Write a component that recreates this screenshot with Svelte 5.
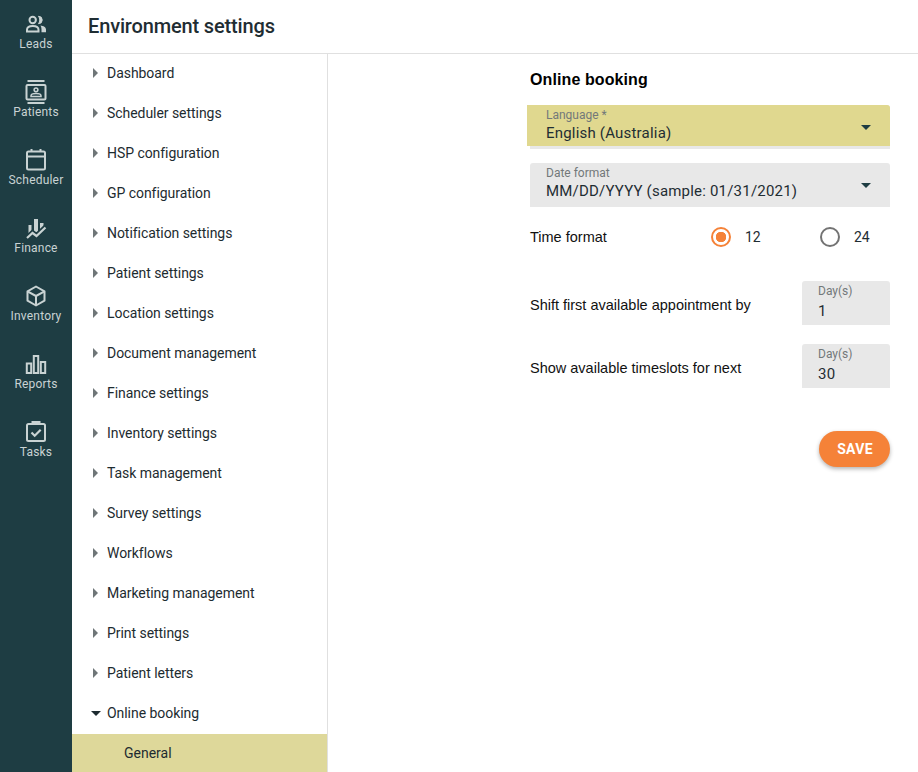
<script>
  const railItems = [
    { label: 'Leads', icon: 'leads' },
    { label: 'Patients', icon: 'patients' },
    { label: 'Scheduler', icon: 'scheduler' },
    { label: 'Finance', icon: 'finance' },
    { label: 'Inventory', icon: 'inventory' },
    { label: 'Reports', icon: 'reports' },
    { label: 'Tasks', icon: 'tasks' }
  ];

  const menu = [
    'Dashboard',
    'Scheduler settings',
    'HSP configuration',
    'GP configuration',
    'Notification settings',
    'Patient settings',
    'Location settings',
    'Document management',
    'Finance settings',
    'Inventory settings',
    'Task management',
    'Survey settings',
    'Workflows',
    'Marketing management',
    'Print settings',
    'Patient letters'
  ];

  let timeFormat = $state('12');
</script>

<div class="shell">
  <nav class="rail">
    {#each railItems as item}
      <div class="rail-item">
        <svg width="24" height="24" viewBox="0 0 24 24" fill="none" stroke="currentColor" stroke-width="2">
          {#if item.icon === 'leads'}
            <circle cx="8.700" cy="8" r="3.200" />
            <path d="M14.500 4.300a3.700 3.700 0 0 1 0 7.400c.9-1 1.300-2.300 1.300-3.700s-.4-2.700-1.300-3.700z" fill="currentColor" stroke-width="1" />
            <path d="M3 19.500v-1.800c0-2.400 2.700-3.700 5.800-3.700s5.700 1.300 5.700 3.700v1.800z" />
            <path d="M16.500 13.500c3 .3 5.500 1.600 5.500 4v2.800h-4.500v-3c0-1.500-.4-2.800-1-3.800z" fill="currentColor" stroke="none" />
          {:else if item.icon === 'patients'}
            <path d="M3.500 1h17M3.500 23h17" />
            <rect x="2.500" y="5" width="19" height="14.500" rx="1" />
            <circle cx="12" cy="9.800" r="1.900" stroke-width="1.500" />
            <path d="M7 16.500v-.8c0-1.400 2.300-2.200 5-2.200s5 .8 5 2.200v.8z" stroke-width="1.500" />
          {:else if item.icon === 'scheduler'}
            <rect x="3" y="3.500" width="18" height="18" rx="1.500" />
            <path d="M3 8.500h18M7.500 1v3M16.500 1v3" />
          {:else if item.icon === 'finance'}
            <path d="M4.500 9h3v9h-3zM10 3h4v15h-4zM16 7h3.500v9H16z" fill="currentColor" stroke="none" />
            <path d="M2 22.500l6.500-6 4 3 9.500-9" stroke="#1e3d43" stroke-width="5" />
            <path d="M3 22l5.500-5 4 3 9-8.500" stroke-width="2.200" />
          {:else if item.icon === 'inventory'}
            <path d="M12 2.500l8.500 4.800v9.400L12 21.500l-8.500-4.800V7.300z" stroke-linejoin="round" />
            <path d="M3.500 7.300L12 12l8.500-4.700M12 12v9.500" />
          {:else if item.icon === 'reports'}
            <rect x="2.800" y="11.500" width="4.400" height="9.500" />
            <rect x="9.800" y="4" width="4.400" height="17" />
            <rect x="16.800" y="10" width="4.400" height="11" />
          {:else}
            <rect x="3" y="4" width="18" height="17" rx="1.500" />
            <path d="M8.500 4V2h7v2" />
            <path d="M7.500 12.500l3.200 3.200 6-6" stroke-width="2.200" />
          {/if}
        </svg>
        <span>{item.label}</span>
      </div>
    {/each}
  </nav>

  <div class="page">
    <header class="topbar">
      <h1>Environment settings</h1>
    </header>

    <div class="body">
      <aside class="menu">
        {#each menu as entry}
          <div class="menu-row">
            <span class="caret-right"></span>
            {entry}
          </div>
        {/each}
        <div class="menu-row open">
          <span class="caret-down"></span>
          Online booking
        </div>
        <div class="menu-sub">General</div>
      </aside>

      <main class="content">
        <h2>Online booking</h2>

        <div class="select highlighted">
          <div class="select-text">
            <label for="language">Language *</label>
            <div id="language" class="value">English (Australia)</div>
          </div>
          <span class="select-caret"></span>
        </div>

        <div class="select date">
          <div class="select-text">
            <label for="date-format">Date format</label>
            <div id="date-format" class="value">MM/DD/YYYY (sample: 01/31/2021)</div>
          </div>
          <span class="select-caret"></span>
        </div>

        <div class="time-row">
          <span class="row-label">Time format</span>
          <button class="radio" class:on={timeFormat === '12'} onclick={() => (timeFormat = '12')}>
            <span class="dot"></span>
            <span class="radio-label">12</span>
          </button>
          <button class="radio" class:on={timeFormat === '24'} onclick={() => (timeFormat = '24')}>
            <span class="dot"></span>
            <span class="radio-label">24</span>
          </button>
        </div>

        <div class="day-row shift">
          <span class="row-label">Shift first available appointment by</span>
          <div class="day-field">
            <label for="shift">Day(s)</label>
            <div id="shift" class="value">1</div>
          </div>
        </div>

        <div class="day-row next">
          <span class="row-label">Show available timeslots for next</span>
          <div class="day-field">
            <label for="next">Day(s)</label>
            <div id="next" class="value">30</div>
          </div>
        </div>

        <div class="actions">
          <button class="save">SAVE</button>
        </div>
      </main>
    </div>
  </div>
</div>

<style>
  :global(body) {
    margin: 0;
    background: #fff;
    overflow: hidden;
  }

  .shell {
    display: flex;
    height: 772px;
    font-family: 'Roboto', 'Liberation Sans', sans-serif;
    color: #1d2b30;
  }

  .rail {
    width: 72px;
    flex: none;
    background: #1e3d43;
    color: #c9d3d3;
    padding-top: 12px;
    box-sizing: border-box;
  }

  .rail-item {
    height: 68px;
    display: flex;
    flex-direction: column;
    align-items: center;
    font-size: 12px;
    line-height: 16px;
    letter-spacing: 0.2px;
  }

  .rail-item svg {
    display: block;
  }

  .page {
    flex: 1;
    display: flex;
    flex-direction: column;
    min-width: 0;
  }

  .topbar {
    height: 54px;
    flex: none;
    box-sizing: border-box;
    border-bottom: 1px solid #e0e0e0;
    padding: 0 0 2px 16px;
    display: flex;
    align-items: center;
  }

  h1 {
    margin: 0;
    font-size: 20px;
    font-weight: 500;
    letter-spacing: -0.15px;
    color: #1f2d33;
  }

  .body {
    flex: 1;
    display: flex;
    min-height: 0;
  }

  .menu {
    width: 256px;
    flex: none;
    box-sizing: border-box;
    border-right: 1px solid #e0e0e0;
    overflow: hidden;
  }

  .menu-row {
    height: 40px;
    padding-left: 21px;
    display: flex;
    align-items: center;
    gap: 9px;
    font-size: 14px;
    letter-spacing: -0.05px;
    padding-bottom: 2px;
    box-sizing: border-box;
  }

  .caret-right {
    width: 0;
    height: 0;
    border-top: 5px solid transparent;
    border-bottom: 5px solid transparent;
    border-left: 5px solid #6f7678;
  }

  .caret-down {
    width: 0;
    height: 0;
    margin-left: -2px;
    margin-right: -3px;
    border-left: 5px solid transparent;
    border-right: 5px solid transparent;
    border-top: 5px solid #1d2b30;
  }

  .menu-sub {
    height: 39px;
    padding-left: 52px;
    display: flex;
    align-items: center;
    background: #ded89a;
    font-size: 14px;
    padding-bottom: 2px;
    box-sizing: border-box;
  }

  .content {
    flex: 1;
    padding: 16px 28px 0 202px;
    min-width: 0;
  }

  h2 {
    margin: 0 0 15px;
    font-family: 'Liberation Sans', sans-serif;
    font-size: 16px;
    line-height: 20px;
    font-weight: 700;
    letter-spacing: 0.1px;
    color: #000;
  }

  .select {
    position: relative;
    height: 44px;
    box-sizing: border-box;
    background: #e8e8e8;
    border-radius: 3px 3px 0 0;
    padding: 3px 16px 0;
    display: flex;
    align-items: flex-start;
    justify-content: space-between;
  }

  .select.date {
    margin-top: 14px;
  }

  .highlighted::before {
    content: '';
    position: absolute;
    left: -3px;
    right: 0;
    top: 0;
    bottom: 3px;
    background: #e0d88f;
    border-radius: 0 3px 0 0;
  }

  .select-text,
  .select-caret {
    position: relative;
  }

  label {
    display: block;
    font-size: 12px;
    line-height: 14px;
    color: #73787a;
  }

  .value {
    font-size: 15px;
    line-height: 20px;
    letter-spacing: 0.2px;
    color: #1f2d33;
  }

  .select-text .value {
    margin-top: 1px;
  }

  .select-caret {
    width: 0;
    height: 0;
    margin: 17px 3px 0 0;
    border-left: 5px solid transparent;
    border-right: 5px solid transparent;
    border-top: 5px solid #1e3d43;
  }

  .time-row {
    display: flex;
    align-items: center;
    height: 60px;
  }

  .row-label {
    font-family: 'Liberation Sans', sans-serif;
    font-size: 14.500px;
    color: #111;
  }

  .time-row .row-label {
    flex: none;
    width: 181px;
  }

  .radio {
    flex: 1;
    display: flex;
    align-items: center;
    justify-content: flex-start;
    gap: 14px;
    padding: 0;
    border: none;
    background: none;
    font-family: inherit;
    font-size: 14px;
    color: #1f2d33;
    cursor: pointer;
  }

  .radio:last-child {
    flex: none;
    width: 70px;
  }

  .dot {
    width: 20px;
    height: 20px;
    box-sizing: border-box;
    border: 2px solid #737373;
    border-radius: 50%;
  }

  .radio.on .dot {
    border-color: #f58238;
    background: radial-gradient(circle, #f58238 0 5px, transparent 5.500px);
  }

  .day-row {
    display: flex;
    align-items: center;
    justify-content: space-between;
  }

  .day-row .row-label {
    margin-top: 4px;
  }

  .day-row.shift {
    margin-top: 14px;
  }

  .day-row.next {
    margin-top: 19px;
  }

  .day-field {
    width: 88px;
    height: 44px;
    box-sizing: border-box;
    background: #e8e8e8;
    border-radius: 3px 3px 0 0;
    padding: 3px 16px 0;
  }

  .day-field .value {
    margin-top: 3px;
  }

  .actions {
    display: flex;
    justify-content: flex-end;
    margin-top: 43px;
  }

  .save {
    width: 71px;
    height: 36px;
    padding: 0 0 0 1px;
    border: none;
    border-radius: 18px;
    background: #f58238;
    color: #fff;
    font-family: inherit;
    font-size: 14px;
    font-weight: 700;
    letter-spacing: 0.3px;
    box-shadow: 0 2px 4px rgba(0, 0, 0, 0.3);
    cursor: pointer;
  }
</style>
